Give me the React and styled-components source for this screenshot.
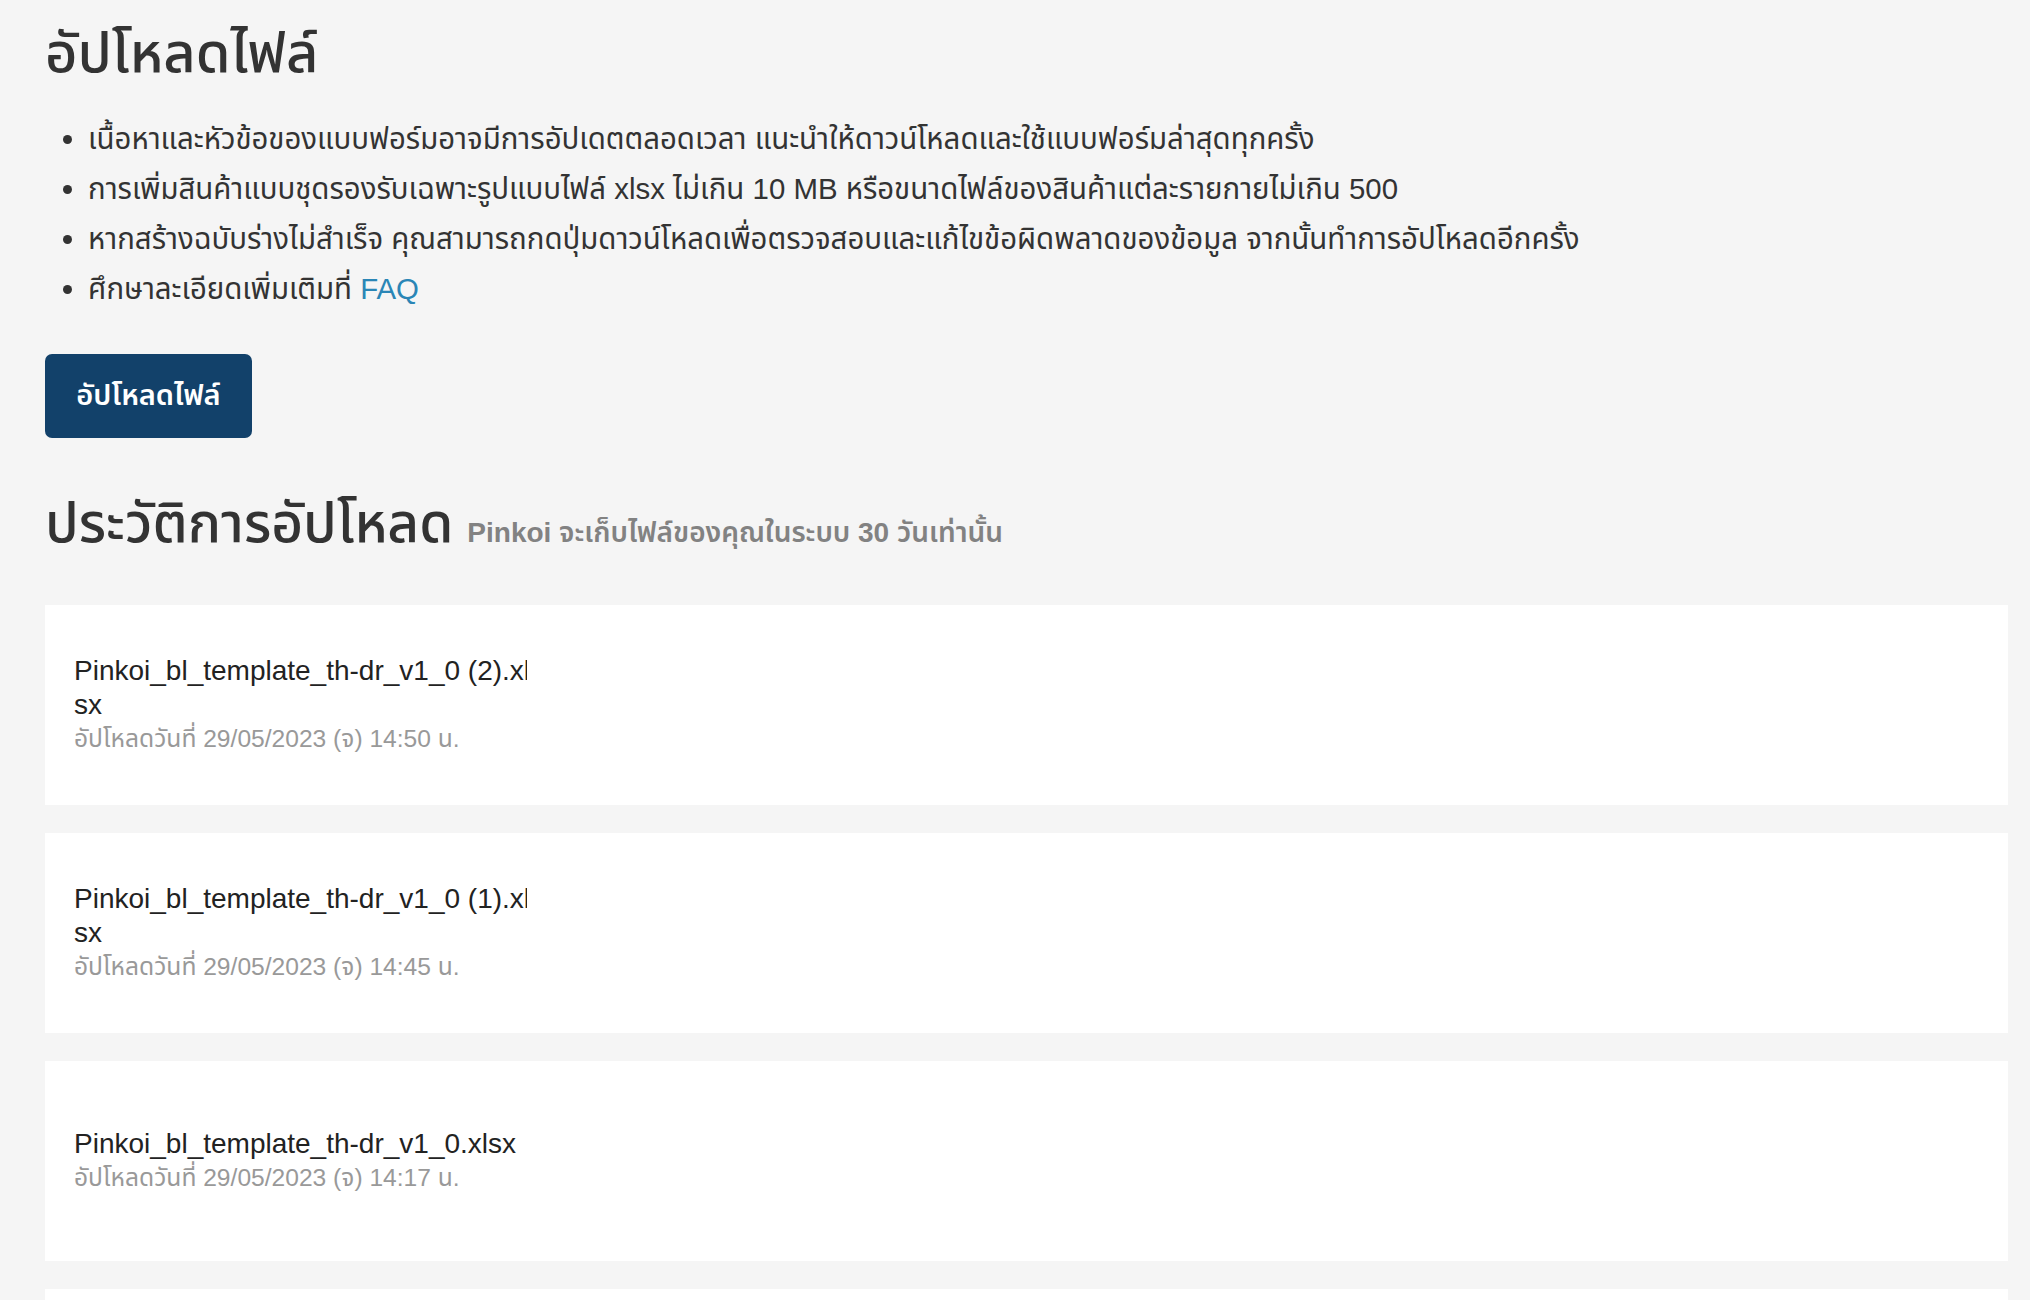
import React from "react";
import styled, { createGlobalStyle } from "styled-components";

const GlobalStyle = createGlobalStyle`
  html, body {
    margin: 0;
    padding: 0;
    background-color: #f5f5f5;
  }
  body {
    font-family: "Liberation Sans", "Noto Sans Thai", "Noto Sans", sans-serif;
    color: #333333;
  }
`;

const Page = styled.div`
  padding: 14px 22px 0 45px;
`;

const Title = styled.h1`
  margin: 0;
  font-size: ${(props) => props.fz || "56px"};
  font-weight: 500;
  line-height: 1.4;
  color: #333333;
`;

const Notes = styled.ul`
  margin: 22px 0 0;
  padding-left: 43px;
  list-style: disc;
`;

const Note = styled.li`
  font-size: 29.4px;
  line-height: 50px;
  color: #333333;
`;

const Link = styled.a`
  color: #2a86b6;
  text-decoration: none;
  cursor: pointer;
`;

const UploadButton = styled.button`
  margin-top: 40px;
  width: 207px;
  height: 84px;
  border: none;
  border-radius: 7px;
  background-color: #12416a;
  color: white;
  font-family: inherit;
  font-size: 29px;
  font-weight: 600;
  cursor: pointer;
`;

const HistoryHead = styled.div`
  display: flex;
  align-items: baseline;
  gap: 14px;
  margin-top: 47px;
`;

const Hint = styled.span`
  font-size: 28px;
  font-weight: 600;
  color: #828282;
`;

const List = styled.div`
  display: flex;
  flex-direction: column;
  gap: 28px;
  margin-top: 43px;
`;

const Card = styled.div`
  display: flex;
  align-items: center;
  height: 200px;
  padding: 0 29px;
  background-color: #ffffff;
`;

const Info = styled.div`
  display: flex;
  flex-direction: column;
`;

const NameClip = styled.div`
  width: 453px;
  overflow: hidden;
`;

const Name = styled.div`
  width: 458px;
  font-size: 28px;
  line-height: 34px;
  color: #222222;
  word-break: break-all;
`;

const Date = styled.div`
  font-size: 24.6px;
  line-height: 34px;
  color: #999999;
`;

const uploads = [
  { name: "Pinkoi_bl_template_th-dr_v1_0 (2).xlsx", date: "29/05/2023 (จ) 14:50 น." },
  { name: "Pinkoi_bl_template_th-dr_v1_0 (1).xlsx", date: "29/05/2023 (จ) 14:45 น." },
  { name: "Pinkoi_bl_template_th-dr_v1_0.xlsx", date: "29/05/2023 (จ) 14:17 น." },
  { name: "Pinkoi_bl_template_th-dr_v1_0.xlsx", date: "29/05/2023 (จ) 14:10 น." },
];

function App() {
  return (
    <Page>
      <GlobalStyle />
      <Title>อัปโหลดไฟล์</Title>
      <Notes>
        <Note>
          เนื้อหาและหัวข้อของแบบฟอร์มอาจมีการอัปเดตตลอดเวลา
          แนะนำให้ดาวน์โหลดและใช้แบบฟอร์มล่าสุดทุกครั้ง
        </Note>
        <Note>
          การเพิ่มสินค้าแบบชุดรองรับเฉพาะรูปแบบไฟล์ xlsx ไม่เกิน 10 MB
          หรือขนาดไฟล์ของสินค้าแต่ละรายกายไม่เกิน 500
        </Note>
        <Note>
          หากสร้างฉบับร่างไม่สำเร็จ คุณสามารถกดปุ่มดาวน์โหลดเพื่อตรวจสอบและแก้ไขข้อผิดพลาดของข้อมูล
          จากนั้นทำการอัปโหลดอีกครั้ง
        </Note>
        <Note>
          ศึกษาละเอียดเพิ่มเติมที่ <Link>FAQ</Link>
        </Note>
      </Notes>
      <UploadButton>อัปโหลดไฟล์</UploadButton>
      <HistoryHead>
        <Title fz="55px">ประวัติการอัปโหลด</Title>
        <Hint>Pinkoi จะเก็บไฟล์ของคุณในระบบ 30 วันเท่านั้น</Hint>
      </HistoryHead>
      <List>
        {uploads.map((u, i) => (
          <Card key={i}>
            <Info>
              <NameClip>
                <Name>{u.name}</Name>
              </NameClip>
              <Date>อัปโหลดวันที่ {u.date}</Date>
            </Info>
          </Card>
        ))}
      </List>
    </Page>
  );
}

export default App;
